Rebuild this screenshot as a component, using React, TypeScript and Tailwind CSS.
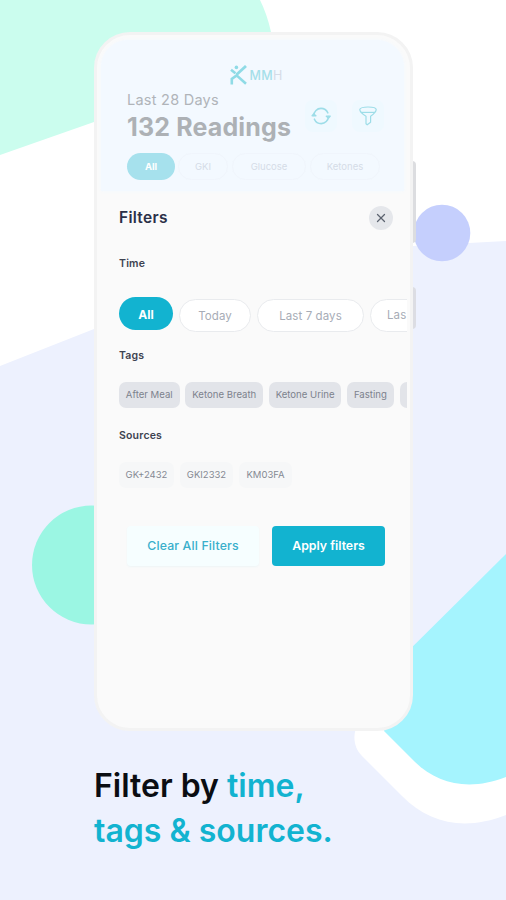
import { X } from 'lucide-react';

const readingTypes = [
    { label: 'GKI', className: 'w-[50px]' },
    { label: 'Glucose', className: 'w-[74px]' },
    { label: 'Ketones', className: 'w-[70px]' },
];

const tags = [
    { label: 'After Meal', className: 'w-[60.5px]' },
    { label: 'Ketone Breath', className: 'w-[78px]' },
    { label: 'Ketone Urine', className: 'w-[72px]' },
    { label: 'Fasting', className: 'w-[47px]' },
    { label: '', className: 'w-[60px]' },
];

const sources = [
    { label: 'GK+2432', className: 'w-[55px]' },
    { label: 'GKI2332', className: 'w-[53px]' },
    { label: 'KM03FA', className: 'w-[53px]' },
];

function Backdrop() {
    return (
        <svg className="absolute inset-0" width="506" height="900" viewBox="0 0 506 900">
            <rect width="506" height="900" fill="#ffffff" />
            <path d="M0 0H260Q267 14 271 32L240 70L94 122L0 155Z" fill="#cbfdee" />
            <path d="M0 366L94 329L250 275Q330 250 413 246L506 241V900H0Z" fill="#edf1fe" />
            <circle cx="442" cy="233" r="28.3" fill="#c5cffd" />
            <circle cx="91.5" cy="565" r="59.5" fill="#9bf6e3" />
            <path
                d="M359 722C352 733 353 747 362 756L402 796C430 824 465 831 506 815V700H380Z"
                fill="#ffffff"
            />
            <path d="M506 554L380 679L384 731L414 761C438 785 470 791 506 777Z" fill="#a5f4fe" />
        </svg>
    );
}

function Logo() {
    return (
        <div className="flex h-5 items-center justify-center gap-[2px] pl-[8px]">
            <svg width="17" height="20" viewBox="0 0 17 20" fill="none" stroke="#8fdbe6">
                <circle cx="6.4" cy="2.4" r="1.8" fill="#8fdbe6" stroke="none" />
                <path d="M1 4.8L5.4 8.2" strokeWidth="2.6" />
                <path d="M16 1L6.4 9.8" strokeWidth="2.8" />
                <path d="M1.8 19.4V14L6.6 10.4L16 18.8" strokeWidth="2.6" />
            </svg>
            <span className="pt-[2px] text-[12.5px] leading-5 tracking-[0.3px] text-[#a5dfe9]">
                <span className="font-medium">MM</span>
                <span className="text-[#d5dce7]">H</span>
            </span>
        </div>
    );
}

function ReadingsHeader() {
    return (
        <div className="mx-[3px] h-[151px] rounded-t-[27px] bg-[#f3f9ff] pt-[25px] shadow-[0_0_4px_#f3f9ff]">
            <Logo />
            <div className="flex justify-between pr-[20px] pl-[26px]">
                <div>
                    <p className="mt-[5px] text-[14.5px] leading-5 tracking-[0.25px] text-[#b0b4b9]">Last 28 Days</p>
                    <p className="mt-[2px] text-[25px] leading-[30px] font-bold tracking-[0.15px] text-[#adb1b5]">
                        132 Readings
                    </p>
                </div>
                <div className="mt-[15px] flex gap-[15px]">
                    <div className="flex size-8 items-center justify-center rounded-lg bg-[#eff9ff]">
                        <svg width="20" height="18" viewBox="0 0 20 18" fill="none" stroke="#9ddde8" strokeWidth="1.6" strokeLinecap="round" strokeLinejoin="round">
                            <path d="M2.7 8.5C3 4.5 6 1.4 10 1.4C13 1.4 15.6 3.1 16.8 5.8" />
                            <path d="M17.5 9.5C17.2 13.5 14.2 16.6 10.2 16.6C7.2 16.6 4.6 14.9 3.4 12.2" />
                            <path d="M1.2 8.8L2.7 7L4.8 8.8ZM15.4 9.2L17.5 11L19 9.2Z" fill="#9ddde8" />
                        </svg>
                    </div>
                    <div className="flex size-8 items-center justify-center rounded-lg bg-[#eff9ff]">
                        <svg width="18" height="20" viewBox="0 0 18 20" fill="none" stroke="#9ddde8" strokeWidth="1.2" strokeLinejoin="round">
                            <path d="M9 1C13.6 1 17.2 2 17.2 3.6C17.2 5.6 15.8 7.4 11.6 10.2V16.2L8.2 18.8L7 17.8V10.2C2.2 7.4 0.8 5.6 0.8 3.6C0.8 2 4.4 1 9 1Z" />
                            <path d="M1.8 6.4H16.2" />
                        </svg>
                    </div>
                </div>
            </div>
            <div className="mt-[11px] flex gap-[4px] pl-[26px] text-[9.5px]">
                <span className="mr-[-1px] flex h-[27px] w-[48px] items-center justify-center rounded-full bg-[#a6e1ed] pt-px font-bold text-white">
                    All
                </span>
                {readingTypes.map((type) => (
                    <span
                        key={type.label}
                        className={`${type.className} flex h-[27px] items-center justify-center rounded-full border border-[#f0f5fc] pt-px text-[#d5dce7]`}
                    >
                        {type.label}
                    </span>
                ))}
            </div>
        </div>
    );
}

function SectionTitle({ children }: { children: string }) {
    return <h3 className="text-[10.5px] leading-4 font-semibold tracking-[0.2px] text-[#3d4250]">{children}</h3>;
}

function FilterSheet() {
    return (
        <div className="pl-[21px]">
            <div className="mt-[15px] flex h-6 items-center justify-between pr-[14px]">
                <h2 className="text-[15.5px] leading-6 font-semibold tracking-[0.3px] text-[#2b3048]">Filters</h2>
                <button className="flex size-6 items-center justify-center rounded-full bg-[#e5e7eb] text-[#5c6370]">
                    <X size={14} strokeWidth={2.2} />
                </button>
            </div>

            <div className="mt-[26px]">
                <SectionTitle>Time</SectionTitle>
            </div>
            <div className="mt-[25px] flex h-[35px] gap-[6px] overflow-hidden text-[11.5px] text-[#a7acb6]">
                <span className="flex h-[33px] w-[54px] shrink-0 items-center justify-center rounded-full bg-[#12b3d0] pt-[2px] text-[12px] font-bold text-white">
                    All
                </span>
                <span className="mt-[2px] flex h-[33px] w-[72px] shrink-0 items-center justify-center rounded-full border-[1.5px] border-[#e9ebee] bg-white pt-[2px] tracking-[0.1px]">
                    Today
                </span>
                <span className="mt-[2px] flex h-[33px] w-[107px] shrink-0 items-center justify-center rounded-full border-[1.5px] border-[#e9ebee] bg-white pt-[2px] tracking-[0.1px]">
                    Last 7 days
                </span>
                <span className="mt-[2px] flex h-[33px] w-[107px] shrink-0 items-center rounded-full border-[1.5px] border-[#e9ebee] bg-white pl-[16px] tracking-[0.1px] whitespace-nowrap">
                    Las
                </span>
            </div>

            <div className="mt-[16px]">
                <SectionTitle>Tags</SectionTitle>
            </div>
            <div className="mt-[18px] flex gap-[5.8px] overflow-hidden">
                {tags.map((tag, index) => (
                    <span
                        key={index}
                        className={`${tag.className} flex h-[26px] shrink-0 items-center justify-center rounded-[7px] bg-[#e2e4e9] text-[9.6px] whitespace-nowrap text-[#7d828d]`}
                    >
                        {tag.label}
                    </span>
                ))}
            </div>

            <div className="mt-[20px]">
                <SectionTitle>Sources</SectionTitle>
            </div>
            <div className="mt-[18px] flex gap-[6px]">
                {sources.map((source) => (
                    <span
                        key={source.label}
                        className={`${source.className} flex h-[26px] shrink-0 items-center justify-center rounded-[7px] bg-[#f6f7f8] text-[9.5px] text-[#858993]`}
                    >
                        {source.label}
                    </span>
                ))}
            </div>

            <div className="mt-[38px] ml-[8px] flex gap-[13px] text-[12.3px] font-medium">
                <button className="h-10 w-[132px] rounded-[4px] bg-[#f6feff] tracking-[0.15px] text-[#39afcb] shadow-[0_1px_2px_#eef5f6]">
                    Clear All Filters
                </button>
                <button className="h-10 w-[113px] rounded-[4px] bg-[#12b3d0] font-semibold text-white">
                    Apply filters
                </button>
            </div>
        </div>
    );
}

export default function App() {
    return (
        <div className="relative h-[900px] w-[506px] overflow-hidden font-['Inter',sans-serif]">
            <Backdrop />

            <div className="relative flex flex-col pt-8 pl-[94px]">
                {/* Phone */}
                <div className="relative h-[699px] w-[319px]">
                    <div className="absolute top-[129px] -right-[3px] h-[82px] w-[4px] rounded-r-sm bg-[#dcdde0]" />
                    <div className="absolute top-[255px] -right-[3px] h-[42px] w-[4px] rounded-r-sm bg-[#dcdde3]" />
                    <div className="relative h-full rounded-[36px] border-[3px] border-[#f3f3f3] bg-[#fafafa] pt-[5px] pr-[3px] pl-[1px]">
                        <ReadingsHeader />
                        <FilterSheet />
                    </div>
                </div>

                <h1 className="mt-[32px] text-[32px] leading-[45px] font-semibold text-[#0b0d12]">
                    Filter by <span className="text-[#12b3d0]">time,</span>
                    <br />
                    <span className="text-[#12b3d0]">tags &amp; sources.</span>
                </h1>
            </div>
        </div>
    );
}
